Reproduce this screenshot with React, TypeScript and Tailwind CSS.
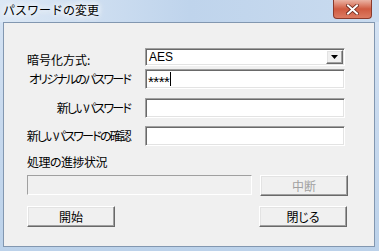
import React from "react";

const jp = "font-['Noto_Sans_CJK_JP','Noto_Sans',sans-serif] [font-feature-settings:'palt']";

const sunken =
  "bg-white border border-t-[#a0a0a0] border-l-[#a0a0a0] border-r-white border-b-white shadow-[inset_1px_1px_0_#696969,inset_-1px_-1px_0_#e3e3e3]";

const raised =
  "bg-[#f0f0f0] border border-t-white border-l-white border-r-[#696969] border-b-[#696969] shadow-[inset_-1px_-1px_0_#a0a0a0,inset_1px_1px_0_#e3e3e3]";

function Row({ label, children, className }: { label: string; children: React.ReactNode; className?: string }) {
  return (
    <div className={`flex items-center ${className ?? ""}`}>
      <div className="w-[126px] text-right text-[12px] leading-none tracking-[-1.8px] text-black whitespace-nowrap">{label}</div>
      <div className="ml-[15px]">{children}</div>
    </div>
  );
}

export default function App() {
  return (
    <div className={`w-[379px] h-[251px] flex flex-col overflow-hidden bg-gradient-to-b from-[#d6e4f4] via-[#c7d9ee] to-[#bcd2ea] ${jp}`}>
      {/* Title bar */}
      <div className="h-[22px] flex items-start bg-gradient-to-r from-[#dce8f5] via-[#bfd4ec] to-[#c9dbef]">
        <div className="ml-[3px] mt-[3px] text-[12px] leading-[14px] text-black font-['Noto_Sans_CJK_JP',sans-serif] [font-feature-settings:normal] [text-shadow:0_0_6px_#fff,0_0_6px_#fff,0_0_10px_#fff]">
          パスワードの変更
        </div>
        <div className="ml-auto mr-[7px] w-[39px] h-[19px] rounded-b-[4px] border border-t-0 border-[#8a3a2c] bg-gradient-to-b from-[#eab3a4] via-[#cf5a40] to-[#dc7b62] flex items-center justify-center">
          <svg width="13" height="11" viewBox="0 0 13 11">
            <path d="M2 1.5 L11 9.5 M11 1.5 L2 9.5" stroke="#6a2418" strokeWidth="3.6" strokeLinecap="square" />
            <path d="M2 1.5 L11 9.5 M11 1.5 L2 9.5" stroke="#ffffff" strokeWidth="2" strokeLinecap="square" />
          </svg>
        </div>
      </div>

      {/* Client area */}
      <div className="ml-[3px] mr-[4px] h-[225px] border border-[#8297b0] bg-[#f0f0f0] flex flex-col">
        <Row label="" className="mt-[25px]">
          <div className={`w-[200px] h-[18px] flex items-stretch ${sunken}`}>
            <div className="flex-1 pl-[3px] flex items-center text-[12px] font-['Liberation_Sans',sans-serif] text-black">AES</div>
            <div className={`w-[17px] m-[1px] flex items-center justify-center ${raised}`}>
              <svg width="7" height="4" viewBox="0 0 7 4">
                <path d="M0 0 H7 L3.5 4 Z" fill="#000" />
              </svg>
            </div>
          </div>
        </Row>
        <div className="-mt-[12px] ml-[23px] text-[12px] leading-none text-black whitespace-nowrap h-[12px] flex items-center">暗号化方式:</div>

        <Row label="オリジナルのパスワード" className="mt-[3px]">
          <div className={`w-[200px] h-[20px] flex items-center pl-[2px] ${sunken}`}>
            <span className="text-[15px] font-['Liberation_Sans',sans-serif] tracking-[-0.5px] text-black leading-none mt-[4px]">****</span>
            <span className="w-[1px] h-[14px] bg-black ml-[1px]" />
          </div>
        </Row>

        <Row label="新しいパスワード" className="mt-[9px]">
          <div className={`w-[200px] h-[20px] ${sunken}`} />
        </Row>

        <Row label="新しいパスワードの確認" className="mt-[8px]">
          <div className={`w-[200px] h-[20px] ${sunken}`} />
        </Row>

        <div className="mt-[9px] ml-[23px] text-[12px] leading-[14px] tracking-[-0.5px] text-black">処理の進捗状況</div>

        <div className="mt-[6px] ml-[23px] flex items-start">
          <div className="w-[225px] h-[20px] border border-t-[#a0a0a0] border-l-[#a0a0a0] border-r-white border-b-white bg-[#f0f0f0]" />
          <button className={`ml-[8px] w-[88px] h-[21px] flex items-center justify-center text-[12px] text-[#a0a0a0] ${raised}`}>中断</button>
        </div>

        <div className="mt-[10px] ml-[23px] flex items-start">
          <button className={`w-[88px] h-[21px] flex items-center justify-center text-[12px] text-black ${raised}`}>開始</button>
          <button className={`ml-auto mr-[27px] w-[88px] h-[21px] flex items-center justify-center text-[12px] text-black ${raised}`}>閉じる</button>
        </div>
      </div>
    </div>
  );
}
